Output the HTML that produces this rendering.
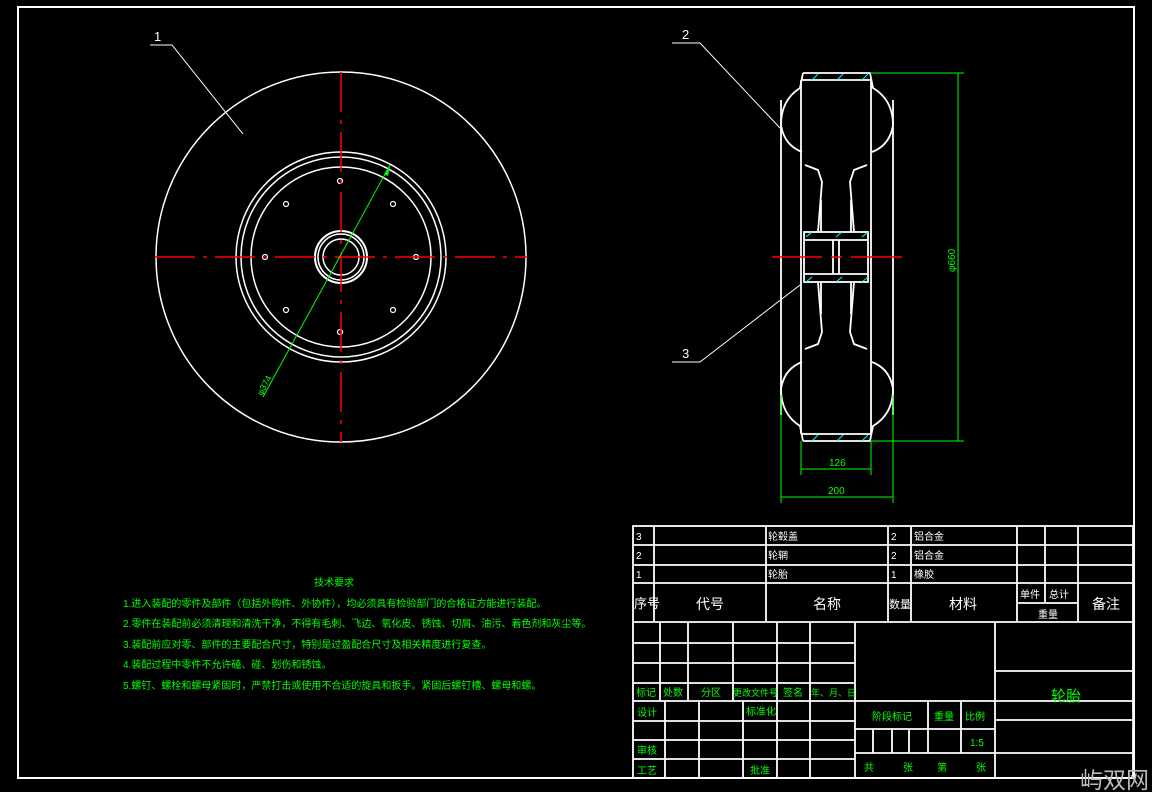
<!DOCTYPE html>
<html><head><meta charset="utf-8"><style>
html,body{margin:0;padding:0;background:#000;width:1152px;height:792px;overflow:hidden}
svg{display:block}
text{font-family:"Liberation Sans","Noto Sans CJK SC",sans-serif}
.w{fill:#fff}.g{fill:#0f0}
</style></head><body>
<svg width="1152" height="792" viewBox="0 0 1152 792" xmlns="http://www.w3.org/2000/svg">
<rect width="1152" height="792" fill="#000"/>
<rect x="18" y="7" width="1116" height="771" fill="none" stroke="#fff" stroke-width="2"/>

<!-- LEFT VIEW -->
<g fill="none" stroke="#fff" stroke-width="1.5">
<circle cx="341" cy="257" r="185"/>
<circle cx="341" cy="257" r="105"/>
<circle cx="341" cy="257" r="100"/>
<circle cx="341" cy="257" r="90"/>
<circle cx="341" cy="257" r="26" stroke-width="2"/>
<circle cx="341" cy="257" r="23"/>
<circle cx="341" cy="257" r="18"/>
<g stroke-width="1.2">
<circle cx="340" cy="181" r="2.5"/><circle cx="340" cy="332" r="2.5"/>
<circle cx="265" cy="257" r="2.5"/><circle cx="416" cy="257" r="2.5"/>
<circle cx="286" cy="204" r="2.5"/><circle cx="393" cy="204" r="2.5"/>
<circle cx="286" cy="310" r="2.5"/><circle cx="393" cy="310" r="2.5"/>
</g>
</g>
<g stroke="#f00" stroke-width="1.5">
<line x1="341" y1="72" x2="341" y2="442" stroke-dasharray="40,8,4,8"/>
<line x1="155" y1="257" x2="527" y2="257" stroke-dasharray="40,8,4,8"/>
</g>
<line x1="263" y1="397" x2="390" y2="165" stroke="#0f0" stroke-width="1"/>
<polygon points="390,165 384,174 388,176" fill="#0f0"/>
<text transform="translate(262,396) rotate(-62)" class="g" font-size="9">φ374</text>
<polyline points="150,45 172,45 243,134" fill="none" stroke="#fff" stroke-width="1"/>
<text x="154" y="41" class="w" font-size="13">1</text>

<!-- RIGHT VIEW -->
<g fill="none" stroke="#fff" stroke-width="1.8">
<line x1="781" y1="100" x2="781" y2="415"/>
<line x1="893" y1="100" x2="893" y2="415"/>
<path d="M803,73 L870,73 L873,88 Q893,100 893,125 Q890,145 872,152"/>
<path d="M803,73 L800,88 Q781,100 781,125 Q784,145 802,152"/>
<path d="M803,441 L870,441 L873,426 Q893,414 893,389 Q890,369 872,362"/>
<path d="M803,441 L800,426 Q781,414 781,389 Q784,369 802,362"/>
<line x1="801" y1="80" x2="801" y2="434"/>
<line x1="871" y1="80" x2="871" y2="434"/>
<line x1="801" y1="80" x2="871" y2="80"/>
<line x1="801" y1="434" x2="871" y2="434"/>
<path d="M805,165 L818,170 L822,182 L818,232"/>
<path d="M867,165 L854,170 L850,182 L854,232"/>
<path d="M805,349 L818,344 L822,332 L818,282"/>
<path d="M867,349 L854,344 L850,332 L854,282"/>
<line x1="821" y1="200" x2="821" y2="232"/><line x1="851" y1="200" x2="851" y2="232"/>
<line x1="821" y1="282" x2="821" y2="314"/><line x1="851" y1="282" x2="851" y2="314"/>
<rect x="804" y="232" width="64" height="50"/>
<line x1="804" y1="240" x2="868" y2="240"/>
<line x1="804" y1="274" x2="868" y2="274"/>
<line x1="833" y1="240" x2="833" y2="274"/>
<line x1="839" y1="240" x2="839" y2="274"/>
</g>
<g stroke="#0ff" stroke-width="1">
<line x1="812" y1="80" x2="818" y2="74"/><line x1="837" y1="80" x2="843" y2="74"/><line x1="862" y1="80" x2="868" y2="74"/>
<line x1="812" y1="441" x2="818" y2="435"/><line x1="837" y1="441" x2="843" y2="435"/><line x1="862" y1="441" x2="868" y2="435"/>
<line x1="806" y1="237" x2="812" y2="232"/><line x1="836" y1="237" x2="842" y2="232"/><line x1="862" y1="237" x2="868" y2="232"/>
<line x1="806" y1="282" x2="812" y2="277"/><line x1="836" y1="282" x2="842" y2="277"/><line x1="862" y1="282" x2="868" y2="277"/>
</g>
<g stroke="#f00" stroke-width="1.5">
<line x1="772" y1="257" x2="822" y2="257"/><line x1="831" y1="257" x2="842" y2="257"/><line x1="851" y1="257" x2="902" y2="257"/>
</g>
<g stroke="#0f0" stroke-width="1" fill="none">
<line x1="870" y1="73" x2="964" y2="73"/>
<line x1="870" y1="441" x2="964" y2="441"/>
<line x1="958" y1="73" x2="958" y2="441"/>
<line x1="801" y1="441" x2="801" y2="475"/>
<line x1="871" y1="441" x2="871" y2="475"/>
<line x1="801" y1="469" x2="871" y2="469"/>
<line x1="781" y1="395" x2="781" y2="503"/>
<line x1="893" y1="395" x2="893" y2="503"/>
<line x1="781" y1="497" x2="893" y2="497"/>
</g>
<text transform="translate(955,272) rotate(-90)" class="g" font-size="10">φ660</text>
<text x="829" y="466" class="g" font-size="10">126</text>
<text x="828" y="494" class="g" font-size="10">200</text>
<polyline points="672,43 700,43 780,128" fill="none" stroke="#fff" stroke-width="1"/>
<text x="682" y="39" class="w" font-size="13">2</text>
<polyline points="672,362 700,362 800,285" fill="none" stroke="#fff" stroke-width="1"/>
<text x="682" y="358" class="w" font-size="13">3</text>

<!-- TECH REQUIREMENTS -->
<g class="g" font-size="10">
<text x="314" y="586">技术要求</text>
<text x="123" y="607">1.进入装配的零件及部件（包括外购件、外协件），均必须具有检验部门的合格证方能进行装配。</text>
<text x="123" y="627">2.零件在装配前必须清理和清洗干净，不得有毛刺、飞边、氧化皮、锈蚀、切屑、油污、着色剂和灰尘等。</text>
<text x="123" y="648">3.装配前应对零、部件的主要配合尺寸，特别是过盈配合尺寸及相关精度进行复查。</text>
<text x="123" y="668">4.装配过程中零件不允许磕、碰、划伤和锈蚀。</text>
<text x="123" y="689">5.螺钉、螺栓和螺母紧固时，严禁打击或使用不合适的旋具和扳手。紧固后螺钉槽、螺母和螺。</text>
</g>

<!-- TITLE BLOCK -->
<g stroke="#fff" stroke-width="1.8" fill="none">
<rect x="633" y="526" width="500" height="252"/>
<line x1="633" y1="545" x2="1133" y2="545"/>
<line x1="633" y1="565" x2="1133" y2="565"/>
<line x1="633" y1="583" x2="1133" y2="583"/>
<line x1="633" y1="622" x2="1133" y2="622"/>
<line x1="654" y1="526" x2="654" y2="622"/>
<line x1="766" y1="526" x2="766" y2="622"/>
<line x1="888" y1="526" x2="888" y2="622"/>
<line x1="911" y1="526" x2="911" y2="622"/>
<line x1="1017" y1="526" x2="1017" y2="622"/>
<line x1="1045" y1="526" x2="1045" y2="603"/>
<line x1="1078" y1="526" x2="1078" y2="622"/>
<line x1="1017" y1="603" x2="1078" y2="603"/>
<line x1="855" y1="622" x2="855" y2="778"/>
<line x1="995" y1="622" x2="995" y2="778"/>
<line x1="633" y1="643" x2="855" y2="643"/>
<line x1="633" y1="663" x2="855" y2="663"/>
<line x1="633" y1="683" x2="855" y2="683"/>
<line x1="633" y1="701" x2="1133" y2="701"/>
<line x1="633" y1="721" x2="855" y2="721"/>
<line x1="633" y1="740" x2="855" y2="740"/>
<line x1="633" y1="759" x2="855" y2="759"/>
<line x1="660" y1="622" x2="660" y2="701"/>
<line x1="688" y1="622" x2="688" y2="701"/>
<line x1="733" y1="622" x2="733" y2="701"/>
<line x1="777" y1="622" x2="777" y2="778"/>
<line x1="810" y1="622" x2="810" y2="778"/>
<line x1="665" y1="701" x2="665" y2="778"/>
<line x1="699" y1="701" x2="699" y2="778"/>
<line x1="743" y1="701" x2="743" y2="778"/>
<line x1="855" y1="729" x2="995" y2="729"/>
<line x1="855" y1="753" x2="1133" y2="753"/>
<line x1="928" y1="701" x2="928" y2="753"/>
<line x1="961" y1="701" x2="961" y2="753"/>
<line x1="873" y1="729" x2="873" y2="753"/>
<line x1="892" y1="729" x2="892" y2="753"/>
<line x1="909" y1="729" x2="909" y2="753"/>
<line x1="995" y1="671" x2="1133" y2="671"/>
<line x1="995" y1="720" x2="1133" y2="720"/>
</g>
<g class="w" font-size="10">
<text x="636" y="540">3</text><text x="768" y="540">轮毂盖</text><text x="891" y="540">2</text><text x="914" y="540">铝合金</text>
<text x="636" y="559">2</text><text x="768" y="559">轮辋</text><text x="891" y="559">2</text><text x="914" y="559">铝合金</text>
<text x="636" y="578">1</text><text x="768" y="578">轮胎</text><text x="891" y="578">1</text><text x="914" y="578">橡胶</text>
<text x="634" y="608" font-size="13">序号</text>
<text x="696" y="609" font-size="14">代号</text>
<text x="813" y="609" font-size="14">名称</text>
<text x="889" y="608" font-size="11">数量</text>
<text x="949" y="609" font-size="14">材料</text>
<text x="1020" y="598">单件</text><text x="1049" y="598">总计</text>
<text x="1038" y="618">重量</text>
<text x="1092" y="609" font-size="14">备注</text>
</g>
<g class="g" font-size="10">
<text x="636" y="696">标记</text><text x="663" y="696">处数</text><text x="701" y="696">分区</text>
<text x="733" y="696" font-size="9">更改文件号</text><text x="783" y="696">签名</text><text x="811" y="696" font-size="9">年、月、日</text>
<text x="637" y="716">设计</text><text x="746" y="715">标准化</text>
<text x="637" y="754">审核</text>
<text x="637" y="774">工艺</text><text x="750" y="774">批准</text>
<text x="872" y="720">阶段标记</text><text x="934" y="720">重量</text><text x="965" y="720">比例</text>
<text x="970" y="746">1:5</text>
<text x="864" y="771">共</text><text x="903" y="771">张</text><text x="937" y="771">第</text><text x="976" y="771">张</text>
<text x="1051" y="701" font-size="15">轮胎</text>
</g>
<text x="1080" y="788" fill="#bbb" font-size="23" font-family="'Noto Sans CJK SC',sans-serif">屿双网</text>
</svg>
</body></html>
